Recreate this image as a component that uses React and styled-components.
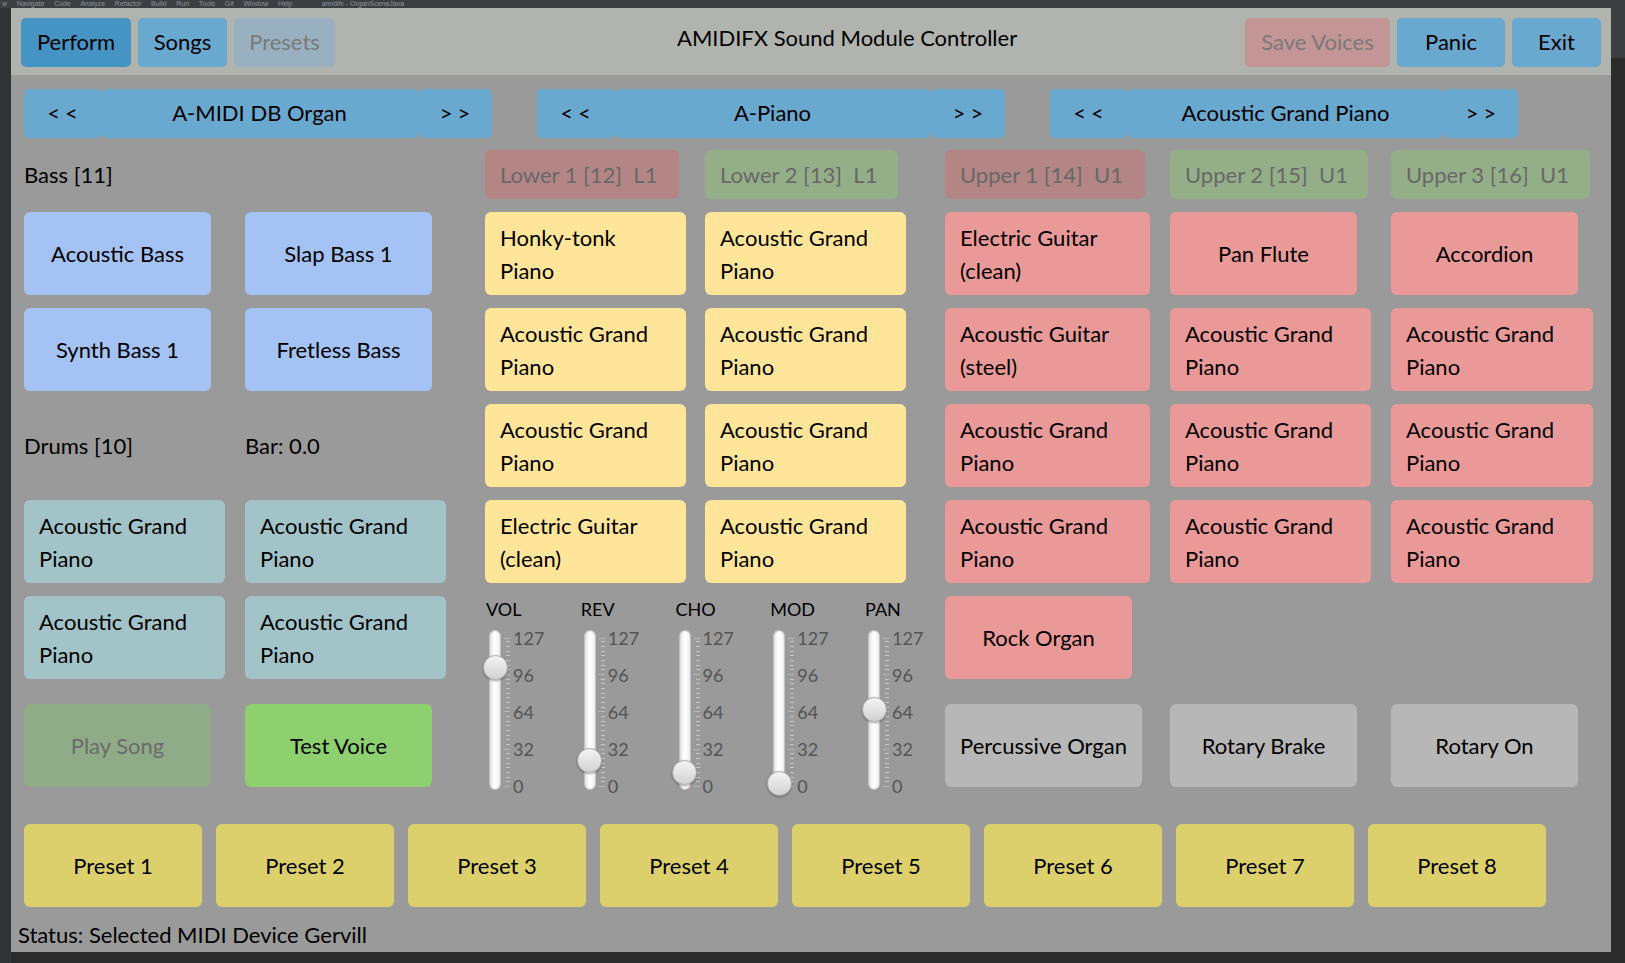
import React from 'react';
import styled, { createGlobalStyle } from 'styled-components';

const GlobalStyle = createGlobalStyle`
  html, body {
    margin: 0;
    padding: 0;
    background: #2b2b2b;
  }
  body {
    font-family: Lato, "Open Sans", sans-serif;
  }
  * { box-sizing: border-box; }
`;

const FONT = 'Lato, "Open Sans", sans-serif';

const colors = {
  header: '#b1b3af',
  body: '#9a9a9a',
  blue: '#69a8cf',
  blueOn: '#4594c4',
  blueOff: '#98b0bf',
  saveOff: '#c39595',
  bass: '#a4c2f4',
  drum: '#a2c4c9',
  lower: '#ffe599',
  upper: '#ea9999',
  fx: '#b7b7b7',
  play: '#8fab87',
  test: '#8ecf70',
  preset: '#dcd06c',
  lowerTag: '#b38585',
  greenTag: '#94ae88',
};

/* ---------- IDE chrome around the app window ---------- */

const Page = styled.div`
  width: 1625px;
  height: 963px;
  overflow: hidden;
  background: #2b2b2b;
`;

const IdeMenu = styled.div`
  height: 8px;
  background: #3c3f41;
  color: #8c959e;
  font: 7px/8px "Liberation Sans", sans-serif;
  white-space: pre;
  padding-left: 2px;
`;

const Workspace = styled.div`
  display: flex;
  height: 955px;
`;

const IdeGutter = styled.div`
  width: 11px;
  background: #313335;
`;

const IdeSide = styled.div`
  flex: 1;
  background: linear-gradient(#3c3f41 0 50px, #2b2b2b 50px);
`;

/* ---------- app window ---------- */

const Window = styled.div`
  width: 1600px;
  height: 944px;
  background: ${colors.body};
  display: flex;
  flex-direction: column;
  font-family: ${FONT};
  color: #000;
`;

const Header = styled.div`
  height: 67px;
  background: ${colors.header};
  display: flex;
  align-items: flex-start;
  padding: 10px 10px 0 10px;
  gap: 7px;
`;

const TabGroup = styled.div`
  display: flex;
  gap: 7px;
`;

const Title = styled.div`
  flex: 1;
  margin-left: 335px;
  font-size: 22px;
  line-height: 40px;
  white-space: nowrap;
`;

const TabButton = styled.button`
  height: 49px;
  width: ${p => p.$w}px;
  border: none;
  border-radius: 5px;
  padding: 0 0 3px;
  background: ${p => p.$bg};
  color: ${p => (p.$muted ? '#7a7a7a' : '#000')};
  font: 22px ${FONT};
`;

const Content = styled.div`
  flex: 1;
  display: flex;
  flex-direction: column;
  padding: 14px 0 0 13px;
`;

const NavRow = styled.div`
  display: flex;
  gap: 45px;
`;

const NavGroup = styled.div`
  display: flex;
`;

const NavButton = styled.button`
  height: 49px;
  width: ${p => p.$w}px;
  border: none;
  border-radius: 5px;
  padding: 0 0 2px;
  background: ${colors.blue};
  color: #000;
  font: 22px ${FONT};
  letter-spacing: ${p => (p.$arrow ? '5px' : '0')};
  text-indent: ${p => (p.$arrow ? '5px' : '0')};
`;

const Main = styled.div`
  display: flex;
  gap: 39px;
  margin-top: 12px;
`;

const PadGrid = styled.div`
  display: grid;
  grid-template-columns: ${p => p.$cols};
  grid-template-rows: 49px repeat(5, 83px) 95px;
  column-gap: ${p => p.$gap}px;
  row-gap: 13px;
  align-items: end;
`;

const GroupLabel = styled.div`
  grid-column: ${p => (p.$span ? '1 / -1' : 'auto')};
  align-self: center;
  font-size: 22px;
  line-height: 28px;
  white-space: pre;
`;

const ChannelTag = styled.div`
  height: 49px;
  width: ${p => p.$w}px;
  border-radius: 6px;
  background: ${p => p.$bg};
  color: #686868;
  font-size: 22px;
  line-height: 49px;
  padding-left: 15px;
  white-space: pre;
`;

const Pad = styled.button`
  grid-column: ${p => (p.$full ? '1 / -1' : 'auto')};
  justify-self: start;
  height: 83px;
  min-width: 187px;
  width: ${p => (p.$wrap ? '100%' : 'auto')};
  padding: 0 15px;
  border: none;
  border-radius: 6px;
  background: ${p => p.$bg};
  color: ${p => (p.$muted ? '#6b6b6b' : '#000')};
  font: 22px/33px ${FONT};
  text-align: ${p => (p.$wrap ? 'left' : 'center')};
  white-space: pre-line;
`;

/* ---------- sliders ---------- */

const SCALE_TOP = 8;
const SCALE_BOTTOM = 156;
const valueToY = v => SCALE_BOTTOM - (v * (SCALE_BOTTOM - SCALE_TOP)) / 127;

const SliderRow = styled.div`
  grid-column: 1 / -1;
  grid-row: 6 / 8;
  align-self: start;
  display: flex;
  width: 474px;
  padding-top: 3px;
`;

const SliderCol = styled.div`
  width: 94.75px;
  display: flex;
  flex-direction: column;
`;

const SliderName = styled.div`
  font-size: 18px;
  line-height: 20px;
  padding-left: 1px;
`;

const SliderBody = styled.div`
  position: relative;
  display: flex;
  align-items: flex-start;
  height: 160px;
  margin-top: 11px;
  padding-left: 4px;
`;

const Track = styled.div`
  width: 12px;
  height: 160px;
  border: 1px solid #c2c2c2;
  border-radius: 6px;
  background: linear-gradient(to right, #e4e4e4, #ffffff 45%, #f1f1f1);
  box-shadow: inset 0 0 2px rgba(0, 0, 0, 0.12);
`;

const Thumb = styled.div`
  position: absolute;
  left: -2.5px;
  width: 25px;
  height: 25px;
  border-radius: 50%;
  border: 1px solid #a9a9a9;
  background: linear-gradient(#f4f4f4, #d2d2d2);
  box-shadow: 0 1px 2px rgba(0, 0, 0, 0.35);
`;

const TickSvg = styled.svg`
  margin-left: 3px;
  flex: none;
`;

const TickLabels = styled.div`
  margin: -2px 0 0 3px;
  height: 168px;
  display: flex;
  flex-direction: column;
  justify-content: space-between;
  color: #545454;
  font-size: 18px;
  line-height: 20px;
`;

const ticks = [];
for (let v = 0; v <= 124; v += 4) ticks.push(v);
ticks.push(127);

const Slider = ({ name, value }) => (
  <SliderCol>
    <SliderName>{name}</SliderName>
    <SliderBody>
      <Track />
      <TickSvg width="6" height="160" viewBox="0 0 6 160">
        {ticks.map(v => {
          const major = v % 32 === 0 || v === 127;
          const y = Math.round(valueToY(v)) + 0.5;
          return (
            <line
              key={v}
              x1={major ? 0 : 2}
              x2="6"
              y1={y}
              y2={y}
              stroke={major ? '#b8b8b8' : '#c6c6c6'}
              strokeWidth="1"
            />
          );
        })}
      </TickSvg>
      <TickLabels>
        <span>127</span>
        <span>96</span>
        <span>64</span>
        <span>32</span>
        <span>0</span>
      </TickLabels>
      <Thumb style={{ top: valueToY(value) - 12.5 }} />
    </SliderBody>
  </SliderCol>
);

/* ---------- presets + status ---------- */

const PresetRow = styled.div`
  display: flex;
  gap: 14px;
  margin-top: 37px;
`;

const PresetButton = styled.button`
  width: 178px;
  height: 83px;
  border: none;
  border-radius: 6px;
  background: ${colors.preset};
  color: #000;
  font: 22px ${FONT};
`;

const Status = styled.div`
  margin: 14px 0 0 -6px;
  font-size: 22px;
  line-height: 28px;
`;

/* ---------- data ---------- */

const navGroups = ['A-MIDI DB Organ', 'A-Piano', 'Acoustic Grand Piano'];

const AGP = 'Acoustic Grand\nPiano';

const lowerPads = [
  'Honky-tonk\nPiano', AGP,
  AGP, AGP,
  AGP, AGP,
  'Electric Guitar\n(clean)', AGP,
];

const upperPads = [
  ['Electric Guitar\n(clean)', true], ['Pan Flute', false], ['Accordion', false],
  ['Acoustic Guitar\n(steel)', true], [AGP, true], [AGP, true],
  [AGP, true], [AGP, true], [AGP, true],
  [AGP, true], [AGP, true], [AGP, true],
];

const sliders = [
  ['VOL', 102],
  ['REV', 22],
  ['CHO', 12],
  ['MOD', 2],
  ['PAN', 66],
];

export default function App() {
  return (
    <Page>
      <GlobalStyle />
      <IdeMenu>
        {'w     Navigate     Code     Analyze     Refactor     Build     Run     Tools     Git     Window     Help               amidifx - OrganSceneJava'}
      </IdeMenu>
      <Workspace>
        <IdeGutter />
        <Window>
          <Header>
            <TabGroup>
              <TabButton $w={110} $bg={colors.blueOn}>Perform</TabButton>
              <TabButton $w={89} $bg={colors.blue}>Songs</TabButton>
              <TabButton $w={101} $bg={colors.blueOff} $muted>Presets</TabButton>
            </TabGroup>
            <Title>AMIDIFX Sound Module Controller</Title>
            <TabGroup>
              <TabButton $w={145} $bg={colors.saveOff} $muted>Save Voices</TabButton>
              <TabButton $w={108} $bg={colors.blue}>Panic</TabButton>
              <TabButton $w={89} $bg={colors.blue}>Exit</TabButton>
            </TabGroup>
          </Header>

          <Content>
            <NavRow>
              {navGroups.map(name => (
                <NavGroup key={name}>
                  <NavButton $w={77} $arrow>{'<<'}</NavButton>
                  <NavButton $w={317}>{name}</NavButton>
                  <NavButton $w={74} $arrow>{'>>'}</NavButton>
                </NavGroup>
              ))}
            </NavRow>

            <Main>
              <PadGrid $cols="201px 201px" $gap={20}>
                <GroupLabel $span>Bass [11]</GroupLabel>
                <Pad $bg={colors.bass}>Acoustic Bass</Pad>
                <Pad $bg={colors.bass}>Slap Bass 1</Pad>
                <Pad $bg={colors.bass}>Synth Bass 1</Pad>
                <Pad $bg={colors.bass}>Fretless Bass</Pad>
                <GroupLabel>Drums [10]</GroupLabel>
                <GroupLabel>Bar: 0.0</GroupLabel>
                <Pad $bg={colors.drum} $wrap>{AGP}</Pad>
                <Pad $bg={colors.drum} $wrap>{AGP}</Pad>
                <Pad $bg={colors.drum} $wrap>{AGP}</Pad>
                <Pad $bg={colors.drum} $wrap>{AGP}</Pad>
                <Pad $bg={colors.play} $muted>Play Song</Pad>
                <Pad $bg={colors.test}>Test Voice</Pad>
              </PadGrid>

              <PadGrid $cols="201px 201px" $gap={19}>
                <ChannelTag $w={194} $bg={colors.lowerTag}>{'Lower 1 [12]  L1'}</ChannelTag>
                <ChannelTag $w={193} $bg={colors.greenTag}>{'Lower 2 [13]  L1'}</ChannelTag>
                {lowerPads.map((label, i) => (
                  <Pad key={i} $bg={colors.lower} $wrap>{label}</Pad>
                ))}
                <SliderRow>
                  {sliders.map(([name, value]) => (
                    <Slider key={name} name={name} value={value} />
                  ))}
                </SliderRow>
              </PadGrid>

              <PadGrid $cols="205px 201px 202px" $gap={20}>
                <ChannelTag $w={200} $bg={colors.lowerTag}>{'Upper 1 [14]  U1'}</ChannelTag>
                <ChannelTag $w={198} $bg={colors.greenTag}>{'Upper 2 [15]  U1'}</ChannelTag>
                <ChannelTag $w={199} $bg={colors.greenTag}>{'Upper 3 [16]  U1'}</ChannelTag>
                {upperPads.map(([label, wrap], i) => (
                  <Pad key={i} $bg={colors.upper} $wrap={wrap}>{label}</Pad>
                ))}
                <Pad $bg={colors.upper} $full>Rock Organ</Pad>
                <Pad $bg={colors.fx}>Percussive Organ</Pad>
                <Pad $bg={colors.fx}>Rotary Brake</Pad>
                <Pad $bg={colors.fx}>Rotary On</Pad>
              </PadGrid>
            </Main>

            <PresetRow>
              {[1, 2, 3, 4, 5, 6, 7, 8].map(n => (
                <PresetButton key={n}>Preset {n}</PresetButton>
              ))}
            </PresetRow>

            <Status>Status: Selected MIDI Device Gervill</Status>
          </Content>
        </Window>
        <IdeSide />
      </Workspace>
    </Page>
  );
}
